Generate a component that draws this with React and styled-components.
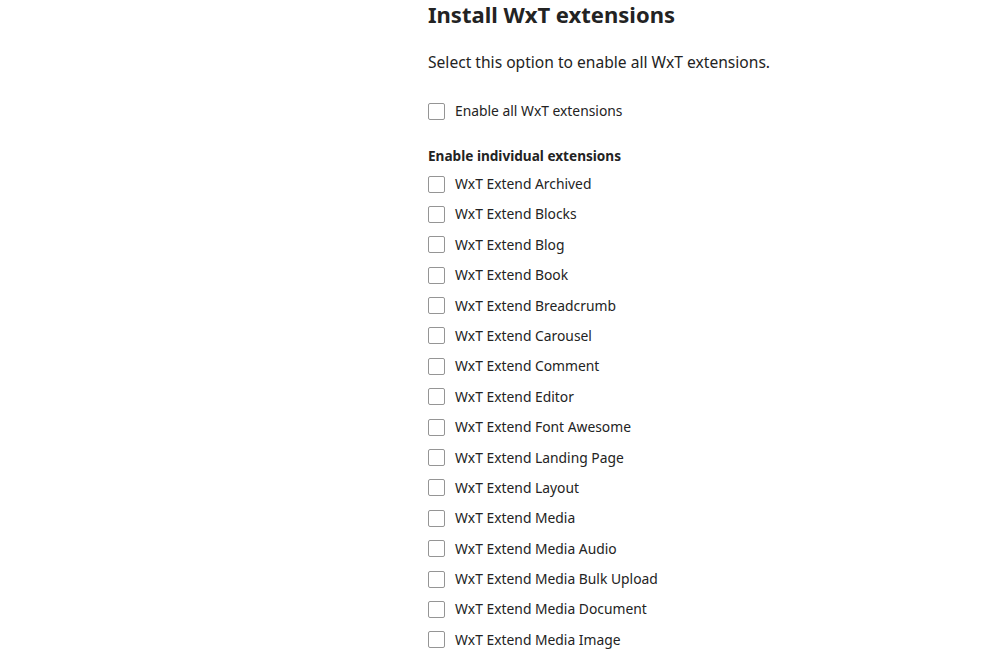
import React from 'react'
import styled, { createGlobalStyle } from 'styled-components'

const GlobalStyle = createGlobalStyle`
  html, body {
    margin: 0;
    padding: 0;
    background: #fff;
  }
  body {
    font-family: 'Noto Sans', 'Open Sans', sans-serif;
    color: #232323;
  }
`

const extensions = [
  'Archived',
  'Blocks',
  'Blog',
  'Book',
  'Breadcrumb',
  'Carousel',
  'Comment',
  'Editor',
  'Font Awesome',
  'Landing Page',
  'Layout',
  'Media',
  'Media Audio',
  'Media Bulk Upload',
  'Media Document',
  'Media Image',
]

const Checkbox = ({ id, label }) => (
  <Row htmlFor={id}>
    <Box type='checkbox' id={id} />
    <Label>{label}</Label>
  </Row>
)

const App = () => {
  return (
    <>
      <GlobalStyle />
      <Page>
        <Title>Install WxT extensions</Title>
        <Intro>Select this option to enable all WxT extensions.</Intro>
        <AllRow>
          <Checkbox id='all' label='Enable all WxT extensions' />
        </AllRow>
        <Fieldset>
          <Legend>Enable individual extensions</Legend>
          <List>
            {extensions.map((name) => (
              <Checkbox key={name} id={name} label={`WxT Extend ${name}`} />
            ))}
          </List>
        </Fieldset>
      </Page>
    </>
  )
}

const Page = styled.main`
  padding: 0 0 0 428px;
  height: 652px;
  overflow: hidden;
`

const Title = styled.h2`
  margin: 0;
  padding-top: 2.5px;
  font-size: 22px;
  line-height: 22px;
  font-weight: 700;
`

const Intro = styled.p`
  margin: 25.5px 0 0;
  font-size: 15.6px;
  line-height: 24px;
`

const AllRow = styled.div`
  margin-top: 26px;
`

const Fieldset = styled.fieldset`
  margin: 24px 0 0;
  padding: 0;
  border: 0;
`

const Legend = styled.legend`
  padding: 0;
  font-size: 13.6px;
  font-weight: 700;
  line-height: 20px;
`

const List = styled.div`
  display: flex;
  flex-direction: column;
  gap: 8.4px;
  margin-top: 7px;
`

const Row = styled.label`
  display: flex;
  align-items: center;
  gap: 10px;
  height: 22px;
  cursor: pointer;
`

const Box = styled.input`
  appearance: none;
  margin: 0;
  width: 17px;
  height: 17px;
  border: 1px solid #959595;
  border-radius: 2px;
  background: #fff;
  flex-shrink: 0;
`

const Label = styled.span`
  font-size: 13.85px;
  line-height: 20px;
`

export default App
